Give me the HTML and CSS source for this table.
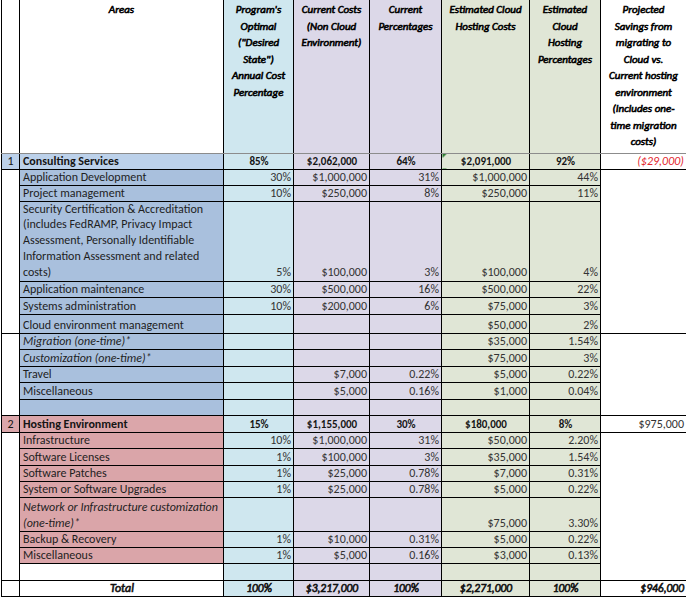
FILE: index.html
```html
<!DOCTYPE html>
<html>
<head>
<meta charset="utf-8">
<title>Cloud Cost Comparison</title>
<link rel="stylesheet" href="styles.css">
</head>
<body>
<table class="sheet">
<colgroup>
<col class="w0"><col class="w1"><col class="w2"><col class="w3"><col class="w4"><col class="w5"><col class="w6"><col class="w7">
</colgroup>
<tr class="hdr">
<td></td>
<td>Areas</td>
<td>Program's<br>Optimal<br>("Desired<br>State")<br>Annual Cost<br>Percentage</td>
<td>Current Costs<br>(Non Cloud<br>Environment)</td>
<td>Current<br>Percentages</td>
<td>Estimated Cloud<br>Hosting Costs</td>
<td>Estimated<br>Cloud<br>Hosting<br>Percentages</td>
<td>Projected<br>Savings from<br>migrating to<br>Cloud vs.<br>Current hosting<br>environment<br>(Includes one-<br>time migration<br>costs)</td>
</tr>
<tr class="sum cs1 h16">
<td>1</td><td>Consulting Services</td><td>85%</td><td>$2,062,000</td><td>64%</td><td class="flag">$2,091,000</td><td>92%</td><td class="neg">($29,000)</td>
</tr>
<tr class="cs nr h16"><td></td><td>Application Development</td><td>30%</td><td>$1,000,000</td><td>31%</td><td>$1,000,000</td><td>44%</td><td></td></tr>
<tr class="cs nr h16"><td></td><td>Project management</td><td>10%</td><td>$250,000</td><td>8%</td><td>$250,000</td><td>11%</td><td></td></tr>
<tr class="cs nr h80 tall"><td></td><td>Security Certification &amp; Accreditation<br>(includes FedRAMP, Privacy Impact<br>Assessment, Personally Identifiable<br>Information Assessment and related<br>costs)</td><td>5%</td><td>$100,000</td><td>3%</td><td>$100,000</td><td>4%</td><td></td></tr>
<tr class="cs nr h16"><td></td><td>Application maintenance</td><td>30%</td><td>$500,000</td><td>16%</td><td>$500,000</td><td>22%</td><td></td></tr>
<tr class="cs nr h17"><td></td><td>Systems administration</td><td>10%</td><td>$200,000</td><td>6%</td><td>$75,000</td><td>3%</td><td></td></tr>
<tr class="cs cloud h19"><td></td><td>Cloud environment management</td><td></td><td></td><td></td><td>$50,000</td><td>2%</td><td></td></tr>
<tr class="cs it mig h16"><td></td><td>Migration (one-time)*</td><td></td><td></td><td></td><td>$35,000</td><td>1.54%</td><td></td></tr>
<tr class="cs it h17"><td></td><td>Customization (one-time)*</td><td></td><td></td><td></td><td>$75,000</td><td>3%</td><td></td></tr>
<tr class="cs h16"><td></td><td>Travel</td><td></td><td>$7,000</td><td>0.22%</td><td>$5,000</td><td>0.22%</td><td></td></tr>
<tr class="cs h17"><td></td><td>Miscellaneous</td><td></td><td>$5,000</td><td>0.16%</td><td>$1,000</td><td>0.04%</td><td></td></tr>
<tr class="cs h16"><td></td><td></td><td></td><td></td><td></td><td></td><td></td><td></td></tr>
<tr class="sum he1 h17">
<td>2</td><td>Hosting Environment</td><td>15%</td><td>$1,155,000</td><td>30%</td><td>$180,000</td><td>8%</td><td class="plain">$975,000</td>
</tr>
<tr class="he h16"><td></td><td>Infrastructure</td><td>10%</td><td>$1,000,000</td><td>31%</td><td>$50,000</td><td>2.20%</td><td></td></tr>
<tr class="he h17"><td></td><td>Software Licenses</td><td>1%</td><td>$100,000</td><td>3%</td><td>$35,000</td><td>1.54%</td><td></td></tr>
<tr class="he h16"><td></td><td>Software Patches</td><td>1%</td><td>$25,000</td><td>0.78%</td><td>$7,000</td><td>0.31%</td><td></td></tr>
<tr class="he h16"><td></td><td>System or Software Upgrades</td><td>1%</td><td>$25,000</td><td>0.78%</td><td>$5,000</td><td>0.22%</td><td></td></tr>
<tr class="he it h34 tall2"><td></td><td>Network or Infrastructure customization<br>(one-time)*</td><td></td><td></td><td></td><td>$75,000</td><td>3.30%</td><td></td></tr>
<tr class="he h16"><td></td><td>Backup &amp; Recovery</td><td>1%</td><td>$10,000</td><td>0.31%</td><td>$5,000</td><td>0.22%</td><td></td></tr>
<tr class="he h16"><td></td><td>Miscellaneous</td><td>1%</td><td>$5,000</td><td>0.16%</td><td>$3,000</td><td>0.13%</td><td></td></tr>
<tr class="h17"><td></td><td></td><td></td><td></td><td></td><td></td><td></td><td></td></tr>
<tr class="sum total h16">
<td></td><td>Total</td><td>100%</td><td>$3,217,000</td><td>100%</td><td>$2,271,000</td><td>100%</td><td>$946,000</td>
</tr>
</table>
</body>
</html>
```

FILE: styles.css
```css
html, body {
  margin: 0;
  padding: 0;
  background: #ffffff;
}

body {
  font-family: "Carlito", "Lato", "Liberation Sans", sans-serif;
  font-size: 12px;
  color: #222222;
}

.sheet {
  border-collapse: collapse;
  table-layout: fixed;
  width: 685px;
  margin-left: 1px;
}

.w0 { width: 18px; }
.w1 { width: 204px; }
.w2 { width: 70px; }
.w3 { width: 76px; }
.w4 { width: 72px; }
.w5 { width: 88px; }
.w6 { width: 71px; }
.w7 { width: 86px; }

.sheet td {
  border: 1px solid #000000;
  padding: 0 2px 0 3px;
  vertical-align: bottom;
  line-height: 15px;
  white-space: nowrap;
  overflow: hidden;
  text-align: right;
  color: #333333;
}

.sheet td:nth-child(2) {
  text-align: left;
  color: #1e1e1e;
}

.sheet td:nth-child(3) { background: #cfe7ef; }
.sheet td:nth-child(4),
.sheet td:nth-child(5) { background: #dcd8e8; }
.sheet td:nth-child(6),
.sheet td:nth-child(7) { background: #e0e6d6; }

/* row-number column: only a few horizontal rules */
.sheet td:first-child {
  border-top: none;
  border-bottom: none;
  text-align: center;
  padding: 0;
}

/* savings column: only a few horizontal rules */
.sheet td:last-child {
  border-top: none;
  border-bottom: none;
}

.sheet tr.nr td:last-child { border-right: none; }

/* bold italic: regular italic face, emboldened */
.sheet .hdr td,
.sheet tr.total td {
  font-weight: normal;
  font-style: italic;
  -webkit-text-stroke: 0.6px currentColor;
}

/* header */
.hdr { height: 153px; }
.sheet .hdr td {
  border-top: none;
  border-bottom: 1px solid #8c8c8c;
  vertical-align: top;
  text-align: center;
  font-size: 11px;
  line-height: 16.5px;
  padding: 2px 0 0 0;
  color: #000000;
}

.h16 { height: 16px; }
.h17 { height: 17px; }
.h19 { height: 19px; }
.h34 { height: 34px; }
.h80 { height: 80px; }

.sheet tr.tall td { line-height: 15.8px; }
.sheet tr.tall2 td { line-height: 16px; }

/* section summary rows */
.sheet tr.sum td {
  font-weight: bold;
  text-align: center;
  font-size: 11px;
  color: #151515;
}
.sheet tr.sum td:nth-child(2) {
  text-align: left;
  font-size: 12px;
}
.sheet tr.sum td:first-child {
  font-weight: normal;
  font-size: 12px;
}
.sheet tr.sum td:first-child,
.sheet tr.sum td:last-child {
  border-bottom: 1px solid #000000;
}
.sheet tr.sum td:last-child { text-align: right; }
.sheet tr.he1 td:first-child,
.sheet tr.total td:first-child,
.sheet tr.he1 td:last-child,
.sheet tr.total td:last-child {
  border-top: 1px solid #000000;
}

.sheet tr.cloud td:first-child { border-bottom: 1px solid #000000; }
.sheet tr.mig td:last-child { border-top: 1px solid #000000; }

.sheet tr.cs1 td:first-child,
.sheet tr.cs1 td:nth-child(2) { background: #bcd1ea; }
.sheet tr.cs td:nth-child(2) { background: #a9c0dd; }
.sheet tr.he1 td:first-child,
.sheet tr.he1 td:nth-child(2) { background: #dba6aa; }
.sheet tr.he td:nth-child(2) { background: #daa5a9; }

.sheet tr.it td:nth-child(2) { font-style: italic; }

.sheet tr.total td {
  font-weight: normal;
  font-size: 11.5px;
  color: #111111;
}
.sheet tr.total td:nth-child(2) {
  text-align: center;
  font-size: 12px;
}

.sheet tr.sum td.neg {
  color: #e3262e;
  font-style: italic;
  font-weight: normal;
  font-size: 12px;
}
.sheet tr.sum td.plain {
  font-weight: normal;
  font-size: 12px;
  color: #333333;
}

.sheet td.flag {
  background: linear-gradient(135deg, #2e7d32 3px, transparent 3px), #e0e6d6;
}
```
